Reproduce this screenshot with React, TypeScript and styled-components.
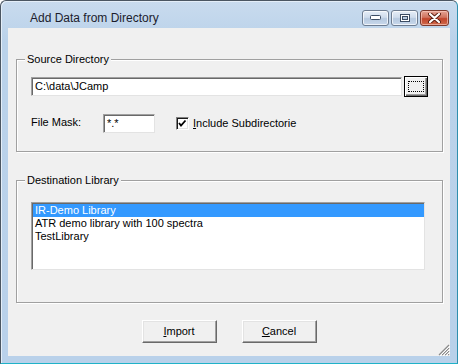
import React from 'react';
import styled, { createGlobalStyle } from 'styled-components';

const GlobalStyle = createGlobalStyle`
  html, body {
    margin: 0;
    padding: 0;
    background: #ffffff;
  }
  body {
    font-family: "Liberation Sans", Arial, sans-serif;
    font-size: 11px;
    color: #000;
  }
`;

const Window = styled.div`
  box-sizing: border-box;
  width: 458px;
  height: 364px;
  display: flex;
  flex-direction: column;
  padding: 0 7px 7px 7px;
  border: 1px solid #4b5662;
  border-right-color: #2f8fae;
  border-bottom-color: #1fb2c8;
  border-radius: 6px 6px 0 0;
  background: linear-gradient(to bottom, #c9dbee 0px, #bad2ea 40px, #b9d1ea 100%);
  box-shadow: inset 1px 1px 0 #e4eef8;
`;

const TitleBar = styled.div`
  height: 27px;
  display: flex;
  align-items: flex-start;
  justify-content: space-between;
`;

const Title = styled.div`
  padding: 9px 0 0 22px;
  font-family: "Liberation Sans", Arial, sans-serif;
  font-size: 12px;
  line-height: 16px;
  color: #1c1c2c;
`;

const Controls = styled.div`
  display: flex;
  gap: 2px;
  padding-top: 9px;
  margin-right: 1px;
`;

const CaptionButton = styled.div<{ close?: boolean }>`
  box-sizing: border-box;
  width: ${({ close }) => (close ? '29px' : '27px')};
  height: 16px;
  border: 1px solid ${({ close }) => (close ? '#7c3a2e' : '#6d7c90')};
  border-radius: 3px;
  display: flex;
  align-items: center;
  justify-content: center;
  background: ${({ close }) =>
    close
      ? 'linear-gradient(to bottom, #e4a394 0%, #d0735f 45%, #c0442b 55%, #cf6a4c 100%)'
      : 'linear-gradient(to bottom, #e6eef7 0%, #cfdcec 45%, #b6c9df 55%, #c9d9ec 100%)'};
  box-shadow: inset 0 0 0 1px ${({ close }) => (close ? 'rgba(255,210,200,0.6)' : 'rgba(255,255,255,0.7)')};
`;

const Client = styled.div`
  position: relative;
  flex: 1;
  background: #f0f0f0;
  display: flex;
  flex-direction: column;
  padding-left: 8px;
`;

const Group = styled.fieldset<{ h: number }>`
  position: relative;
  box-sizing: border-box;
  width: 427px;
  height: ${({ h }) => h}px;
  margin: 0;
  padding: 0;
  border: 1px solid #a0a0a0;
  box-shadow: 1px 1px 0 #ffffff, inset 1px 1px 0 #ffffff;
  min-width: 0;
`;

const Legend = styled.span`
  position: absolute;
  top: -8px;
  left: 8px;
  padding: 0 2px;
  background: #f0f0f0;
  font-size: 11px;
  line-height: 14px;
  color: #000;
`;

const Body = styled.div<{ top: number }>`
  padding: ${({ top }) => top}px 0 0 14px;
  display: flex;
  flex-direction: column;
`;

const Row = styled.div<{ gapTop?: number }>`
  display: flex;
  align-items: center;
  margin-top: ${({ gapTop }) => gapTop ?? 0}px;
`;

const TextBox = styled.div<{ w: number }>`
  box-sizing: border-box;
  width: ${({ w }) => w}px;
  height: 19px;
  background: #fff;
  border-top: 1px solid #a0a0a0;
  border-left: 1px solid #a0a0a0;
  border-right: 1px solid #e3e3e3;
  border-bottom: 1px solid #e3e3e3;
  box-shadow: inset 1px 1px 0 #696969;
  padding: 2px 0 0 3px;
  font-size: 11px;
  line-height: 13px;
  white-space: nowrap;
  overflow: hidden;
`;

const BrowseButton = styled.div`
  box-sizing: border-box;
  width: 24px;
  height: 21px;
  margin-left: 2px;
  border: 1px solid #000;
  background: #f0f0f0;
  box-shadow: inset 1px 1px 0 #ffffff, inset -1px -1px 0 #696969, inset -2px -2px 0 #a0a0a0;
  display: flex;
  align-items: center;
  justify-content: center;
`;

const FocusRect = styled.div`
  width: 16px;
  height: 11px;
  margin: 0 1px 1px 0;
  border: 1px dotted #000;
  box-sizing: border-box;
`;

const FieldLabel = styled.span`
  width: 72px;
  margin-bottom: 4px;
  font-size: 11px;
`;

const CheckBox = styled.div`
  box-sizing: border-box;
  width: 13px;
  height: 13px;
  margin-left: 21px;
  background: #fff;
  border-top: 1px solid #808080;
  border-left: 1px solid #808080;
  border-right: 1px solid #ffffff;
  border-bottom: 1px solid #ffffff;
  box-shadow: inset 1px 1px 0 #1a1a1a, inset -1px -1px 0 #e3e3e3;
  display: flex;
  align-items: center;
  justify-content: center;
`;

const CheckLabel = styled.span`
  margin-left: 4px;
  margin-bottom: 2px;
  font-size: 11px;
`;

const ListBox = styled.div`
  box-sizing: border-box;
  width: 394px;
  height: 68px;
  background: #fff;
  border-top: 1px solid #a0a0a0;
  border-left: 1px solid #a0a0a0;
  border-right: 1px solid #e3e3e3;
  border-bottom: 1px solid #e3e3e3;
  box-shadow: inset 1px 1px 0 #696969;
  padding: 1px 0 0 1px;
`;

const ListItem = styled.div<{ selected?: boolean }>`
  height: 13px;
  line-height: 13px;
  padding-left: 2px;
  font-size: 11px;
  white-space: nowrap;
  background: ${({ selected }) => (selected ? '#3399ff' : 'transparent')};
  color: ${({ selected }) => (selected ? '#ffffff' : '#000000')};
`;

const ButtonBar = styled.div`
  display: flex;
  justify-content: center;
  gap: 25px;
  margin-top: 17px;
  padding-right: 8px;
`;

const PushButton = styled.div`
  box-sizing: border-box;
  width: 75px;
  height: 23px;
  background: #f0f0f0;
  border-top: 1px solid #ffffff;
  border-left: 1px solid #ffffff;
  border-right: 1px solid #696969;
  border-bottom: 1px solid #696969;
  box-shadow: inset -1px -1px 0 #a0a0a0, inset 1px 1px 0 #e3e3e3;
  display: flex;
  align-items: center;
  justify-content: center;
  font-size: 11px;
  padding-bottom: 1px;
`;

const Grip = styled.svg`
  position: absolute;
  right: 0;
  bottom: 0;
`;

const Mnemonic = styled.span`
  text-decoration: underline;
`;

const MinimizeIcon = () => (
  <svg width="11" height="6" viewBox="0 0 11 6">
    <rect x="0.5" y="0.5" width="10" height="4" rx="1" fill="#ffffff" stroke="#3c4d64" />
  </svg>
);

const MaximizeIcon = () => (
  <svg width="10" height="8" viewBox="0 0 10 8">
    <rect x="0.5" y="0.5" width="9" height="7" fill="#ffffff" stroke="#3c4d64" />
    <rect x="2.5" y="2.5" width="5" height="3" fill="#b9cbe0" stroke="#3c4d64" />
  </svg>
);

const CloseIcon = () => (
  <svg width="13" height="10" viewBox="0 0 13 10">
    <path d="M2 1 L11 9 M11 1 L2 9" stroke="#5a1c10" strokeWidth="4" strokeLinecap="round" />
    <path d="M2 1 L11 9 M11 1 L2 9" stroke="#ffffff" strokeWidth="2.2" strokeLinecap="round" />
  </svg>
);

const CheckMark = () => (
  <svg width="9" height="9" viewBox="0 0 9 9">
    <path d="M1 4 L3 6.5 L7.5 1.5" stroke="#000" strokeWidth="1.8" fill="none" />
  </svg>
);

const libraries = ['IR-Demo Library', 'ATR demo library with 100 spectra', 'TestLibrary'];

const App: React.FC = () => {
  return (
    <>
      <GlobalStyle />
      <Window>
        <TitleBar>
          <Title>Add Data from Directory</Title>
          <Controls>
            <CaptionButton><MinimizeIcon /></CaptionButton>
            <CaptionButton><MaximizeIcon /></CaptionButton>
            <CaptionButton close><CloseIcon /></CaptionButton>
          </Controls>
        </TitleBar>
        <Client>
          <Group h={93} style={{ marginTop: 31 }}>
            <Legend>Source Directory</Legend>
            <Body top={16}>
              <Row>
                <TextBox w={371}>C:\data\JCamp</TextBox>
                <BrowseButton><FocusRect /></BrowseButton>
              </Row>
              <Row gapTop={17}>
                <FieldLabel>File Mask:</FieldLabel>
                <TextBox w={52}>*.*</TextBox>
                <CheckBox><CheckMark /></CheckBox>
                <CheckLabel><Mnemonic>I</Mnemonic>nclude Subdirectorie</CheckLabel>
              </Row>
            </Body>
          </Group>
          <Group h={123} style={{ marginTop: 28 }}>
            <Legend>Destination Library</Legend>
            <Body top={21}>
              <ListBox>
                {libraries.map((name, index) => (
                  <ListItem key={name} selected={index === 0}>{name}</ListItem>
                ))}
              </ListBox>
            </Body>
          </Group>
          <ButtonBar>
            <PushButton><Mnemonic>I</Mnemonic>mport</PushButton>
            <PushButton><Mnemonic>C</Mnemonic>ancel</PushButton>
          </ButtonBar>
          <Grip width="13" height="13" viewBox="0 0 13 13">
            <path d="M12 2 L2 12 M12 5 L5 12 M12 8 L8 12 M12 11 L11 12" stroke="#8a8a8a" strokeWidth="1.2" />
            <path d="M13 3 L3 13 M13 6 L6 13 M13 9 L9 13" stroke="#ffffff" strokeWidth="1" />
          </Grip>
        </Client>
      </Window>
    </>
  );
};

export default App;
